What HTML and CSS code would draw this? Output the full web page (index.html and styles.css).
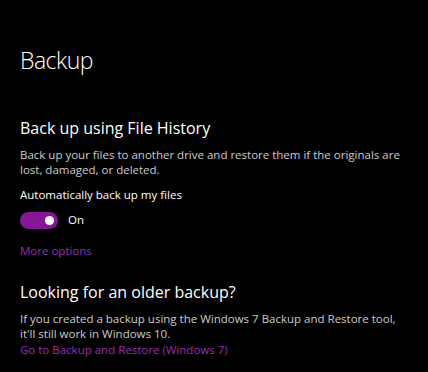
FILE: index.html
```html
<!DOCTYPE html>
<html>
<head>
<meta charset="utf-8">
<link rel="stylesheet" href="styles.css">
</head>
<body>
<main class="page">
  <h1 class="title">Backup</h1>
  <section class="section first">
    <h2 class="heading">Back up using File History</h2>
    <p class="desc">Back up your files to another drive and restore them if the originals are lost, damaged, or deleted.</p>
    <div class="label">Automatically back up my files</div>
    <div class="toggle-row">
      <span class="toggle"><span class="knob"></span></span>
      <span class="state">On</span>
    </div>
    <a class="link more">More options</a>
  </section>
  <section class="section second">
    <h2 class="heading">Looking for an older backup?</h2>
    <p class="desc">If you created a backup using the Windows 7 Backup and Restore tool, it'll still work in Windows 10.</p>
    <a class="link go">Go to Backup and Restore (Windows 7)</a>
  </section>
</main>
</body>
</html>
```
FILE: styles.css
```css
html, body {
  margin: 0;
  padding: 0;
  background: #000;
}
body {
  font-family: "Open Sans", "Noto Sans", sans-serif;
  color: #fff;
  width: 428px;
  height: 372px;
  overflow: hidden;
}
.page {
  padding: 0 0 0 20px;
  display: flex;
  flex-direction: column;
}
.title {
  margin: 45px 0 0;
  font-size: 23px;
  font-weight: 300;
  line-height: 30px;
  letter-spacing: -0.5px;
}
.section {
  display: flex;
  flex-direction: column;
  align-items: flex-start;
}
.first { margin-top: 42px; }
.second { margin-top: 22.5px; }
.heading {
  margin: 0;
  font-size: 16px;
  font-weight: 400;
  line-height: 22px;
}
.desc {
  margin: 8px 0 0;
  font-size: 11.5px;
  line-height: 15px;
  color: #cccccc;
  width: 390px;
}
.label {
  margin-top: 10px;
  font-size: 11.5px;
  line-height: 16px;
}
.toggle-row {
  margin-top: 8.5px;
  display: flex;
  align-items: center;
  gap: 10px;
}
.toggle {
  width: 38px;
  height: 17px;
  border-radius: 8.5px;
  background: #881798;
  display: flex;
  align-items: center;
  justify-content: flex-end;
  padding-right: 4px;
  box-sizing: border-box;
}
.knob {
  width: 9px;
  height: 9px;
  border-radius: 50%;
  background: #fff;
}
.state {
  font-size: 11.5px;
  line-height: 16px;
}
.link {
  font-size: 11.5px;
  line-height: 16px;
  color: #9a2db0;
}
.more { margin-top: 14px; }
.go { margin-top: 0.5px; }
```
